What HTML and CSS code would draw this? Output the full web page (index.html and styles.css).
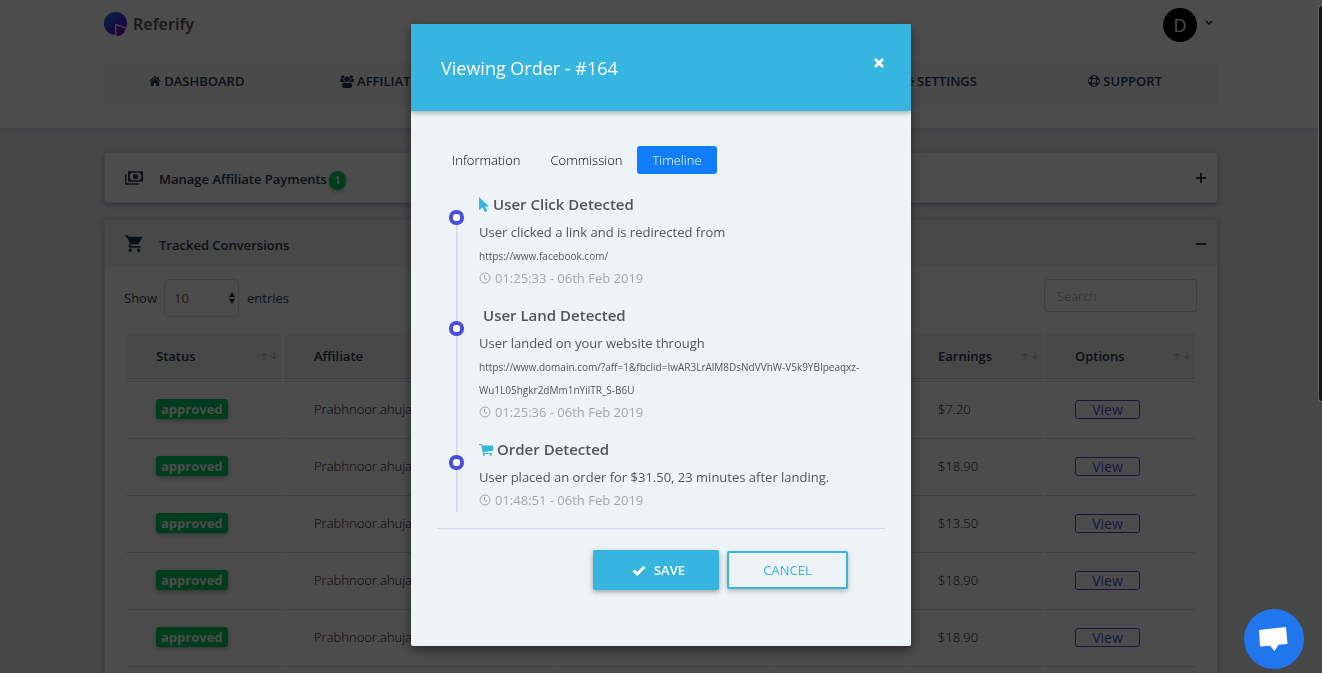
FILE: index.html
```html
<!DOCTYPE html>
<html lang="en">
<head>
<meta charset="utf-8">
<title>Referify</title>
<link rel="stylesheet" href="styles.css">
</head>
<body>
<svg class="sprite" aria-hidden="true">
  <symbol id="i-home" viewBox="0 0 24 24"><path d="M12 6.5 3.5 13.6V21a1 1 0 0 0 1 1h5.3v-6h4.4v6h5.3a1 1 0 0 0 1-1v-7.4z"/><path d="M23.6 12 20 9V3h-3v3.4l-3.8-3.2a1.9 1.9 0 0 0-2.4 0L.4 12l1.2 1.4L12 4.8l10.4 8.6z"/></symbol>
  <symbol id="i-users" viewBox="0 0 28 26"><circle cx="5.5" cy="4" r="3.6"/><circle cx="22.5" cy="4" r="3.6"/><circle cx="14" cy="8.5" r="5.4"/><path d="M7.3 9c-.2 2.300.5 4 1.700 5.200H3c-1.800 0-3-.8-3-2.500C0 9.500.4 7.500 2 7.500c.8.800 5 1.800 5.300 1.500zM20.700 9c.2 2.300-.5 4-1.700 5.200h6c1.800 0 3-.8 3-2.500 0-2.200-.4-4.200-2-4.200-.8.800-5 1.800-5.300 1.500zM8.500 14.500c1.500 1.300 3.500 2 5.500 2s4-.7 5.500-2c3.500.5 4.500 3.500 4.500 7.500 0 2.500-1.500 4-4 4H8c-2.500 0-4-1.500-4-4 0-4 1-7 4.500-7.500z"/></symbol>
  <symbol id="i-cog" viewBox="0 0 24 24"><path fill-rule="evenodd" d="M10 1h4l.6 3 2 .8L19.200 3 22 5.800l-1.800 2.600.8 2 3 .6v4l-3 .6-.8 2 1.800 2.600-2.800 2.800-2.600-1.800-2 .8-.6 2h-4l-.6-2-2-.8L4.800 23 2 20.200l1.800-2.600-.8-2-3-.6v-4l3-.6.8-2L2 5.800 4.800 3l2.600 1.800 2-.8zM12 9a4 4 0 1 0 0 8 4 4 0 0 0 0-8z"/></symbol>
  <symbol id="i-ring" viewBox="0 0 24 24"><g fill="none" stroke="currentColor"><circle cx="12" cy="12" r="10.900" stroke-width="1.800"/><circle cx="12" cy="12" r="5.300" stroke-width="1.800"/><circle cx="12" cy="12" r="8.300" stroke-width="4.600" stroke-dasharray="6.520 6.520" stroke-dashoffset="-3.260"/></g></symbol>
  <symbol id="i-money" viewBox="0 0 24 18"><path fill-rule="evenodd" d="M4 0h20v14H4zm2.500 4v6a2.500 2.500 0 0 1 2 2h11a2.500 2.500 0 0 1 2-2V4a2.500 2.500 0 0 1-2-2h-11a2.500 2.500 0 0 1-2 2zM14 3.500a3.500 3.500 0 1 1 0 7 3.500 3.500 0 0 1 0-7z"/><path d="M0 4h2v12h17v2H0z"/></symbol>
  <symbol id="i-cart" viewBox="1 2 21 20"><path d="M7 18a2 2 0 1 0 0 4 2 2 0 0 0 0-4zM1 2v2h2l3.600 7.590-1.350 2.450C4.520 15.370 5.480 17 7 17h12v-2H7.420a.25.25 0 0 1-.22-.37L8.100 13h7.450c.75 0 1.410-.41 1.750-1.030L21.700 4H5.210l-.94-2zm16 16a2 2 0 1 0 0 4 2 2 0 0 0 0-4z"/></symbol>
  <symbol id="i-facart" viewBox="0 0 28 24"><path d="M0 0h6l.8 3H28v10.500L9 16l.5 2H26v2H7.800L4.500 2H0z"/><circle cx="10" cy="22" r="2"/><circle cx="23.500" cy="22" r="2"/></symbol>
  <symbol id="i-pointer" viewBox="0 0 10 15"><path d="M0 0l10 9.500H6.200l2.200 4.300-2.600 1.200-2.100-4.600L0 13z"/></symbol>
  <symbol id="i-clock" viewBox="0 0 12 12"><g fill="none" stroke="currentColor"><circle cx="6" cy="6" r="5"/><path d="M5.500 3v3.500l2.500 1"/></g></symbol>
  <symbol id="i-check" viewBox="0 0 14 11"><path d="M1.500 5.500 5.300 9 12.500 1.800" fill="none" stroke="currentColor" stroke-width="3"/></symbol>
  <symbol id="i-sort" viewBox="0 0 18 8"><path d="M4 8V1M1 4l3-3 3 3M14 0v7M11 4l3 3 3-3" fill="none" stroke="currentColor"/></symbol>
</svg>

<header class="top">
  <div class="container">
    <div class="brand-row">
      <a class="brand" href="#">
        <svg class="logo" viewBox="0 0 24 25" aria-hidden="true">
          <defs><linearGradient id="lg" x1="0" y1="0" x2="1" y2="1"><stop offset="0" stop-color="#1696e8"/><stop offset=".5" stop-color="#3d2fd6"/><stop offset="1" stop-color="#6a0fd0"/></linearGradient></defs>
          <path fill="url(#lg)" d="M11.500 0A11.500 11.500 0 0 1 23 11.500c0 1.500-.3 3-.8 4.200L11.200 11.500V23A11.500 11.500 0 0 1 11.500 0z"/>
          <path fill="#6a0fd0" d="M12.500 13.300l9.500 3.500a11 11 0 0 1-9.500 7.700z"/>
        </svg>
        <span>Referify</span>
      </a>
      <button class="user" aria-label="Account">
        <span class="avatar">D</span>
        <svg class="caret" viewBox="0 0 8 6" aria-hidden="true"><path d="M1 1l3 3 3-3" fill="none" stroke="currentColor" stroke-width="1.500"/></svg>
      </button>
    </div>
    <nav class="nav">
      <a href="#"><svg class="ic"><use href="#i-home"/></svg>DASHBOARD</a>
      <a href="#"><svg class="ic wide"><use href="#i-users"/></svg>AFFILIATES</a>
      <a class="nav-settings" href="#"><svg class="ic"><use href="#i-cog"/></svg>SETTINGS</a>
      <a href="#"><svg class="ic"><use href="#i-ring"/></svg>SUPPORT</a>
    </nav>
  </div>
</header>

<main class="container">
  <section class="card">
    <div class="card-head">
      <svg class="head-ic money"><use href="#i-money"/></svg>
      <h2>Manage Affiliate Payments</h2><span class="count">1</span>
      <button class="toggle" aria-label="Expand"><svg viewBox="0 0 10 10"><path d="M0 5h10M5 0v10" stroke="currentColor" stroke-width="1.500"/></svg></button>
    </div>
  </section>
  <section class="card">
    <div class="card-head tinted">
      <svg class="head-ic"><use href="#i-cart"/></svg>
      <h2>Tracked Conversions</h2>
      <button class="toggle" aria-label="Collapse"><svg viewBox="0 0 10 10"><path d="M0 5h10" stroke="currentColor" stroke-width="1.500"/></svg></button>
    </div>
    <div class="card-body">
      <div class="tools">
        <label class="length">Show
          <span class="select"><select><option>10</option></select><svg viewBox="0 0 6 12" aria-hidden="true"><path d="M0 5l3-5 3 5zM0 7l3 5 3-5z"/></svg></span>
          entries</label>
        <input class="search" type="search" placeholder="Search" aria-label="Search">
      </div>
      <table class="grid">
        <colgroup><col class="c-status"><col class="c-aff"><col class="c-wide"><col class="c-earn"><col class="c-earn"><col class="c-opt"></colgroup>
        <thead><tr>
          <th><span>Status<svg><use href="#i-sort"/></svg></span></th>
          <th><span>Affiliate</span></th>
          <th></th>
          <th></th>
          <th><span>Earnings<svg><use href="#i-sort"/></svg></span></th>
          <th><span>Options<svg><use href="#i-sort"/></svg></span></th>
        </tr></thead>
        <tbody>
          <tr><td><span class="badge">approved</span></td><td>Prabhnoor.ahuja</td><td></td><td></td><td>$7.20</td><td><button class="view">View</button></td></tr>
          <tr><td><span class="badge">approved</span></td><td>Prabhnoor.ahuja</td><td></td><td></td><td>$18.90</td><td><button class="view">View</button></td></tr>
          <tr><td><span class="badge">approved</span></td><td>Prabhnoor.ahuja</td><td></td><td></td><td>$13.50</td><td><button class="view">View</button></td></tr>
          <tr><td><span class="badge">approved</span></td><td>Prabhnoor.ahuja</td><td></td><td></td><td>$18.90</td><td><button class="view">View</button></td></tr>
          <tr><td><span class="badge">approved</span></td><td>Prabhnoor.ahuja</td><td></td><td></td><td>$18.90</td><td><button class="view">View</button></td></tr>
          <tr><td></td><td></td><td></td><td></td><td></td><td></td></tr>
        </tbody>
      </table>
    </div>
  </section>
</main>

<div class="overlay">
  <div class="modal" role="dialog" aria-modal="true" aria-labelledby="modal-title">
    <div class="modal-head">
      <h1 id="modal-title">Viewing Order - #164</h1>
      <button class="close" aria-label="Close"><svg viewBox="0 0 10 10"><path d="M1 1l8 8M9 1l-8 8" stroke="currentColor" stroke-width="2.600"/></svg></button>
    </div>
    <div class="modal-body">
      <div class="tabs" role="tablist">
        <button role="tab">Information</button>
        <button role="tab">Commission</button>
        <button role="tab" class="active" aria-selected="true">Timeline</button>
      </div>
      <ol class="timeline">
        <li>
          <h3><svg class="pointer"><use href="#i-pointer"/></svg>User Click Detected</h3>
          <p>User clicked a link and is redirected from</p>
          <p class="url">https://www.facebook.com/</p>
          <p class="time"><svg><use href="#i-clock"/></svg>01:25:33 - 06th Feb 2019</p>
        </li>
        <li>
          <h3><span class="no-icon"></span>User Land Detected</h3>
          <p>User landed on your website through</p>
          <p class="url">https://www.domain.com/?aff=1&amp;fbclid=IwAR3LrAlM8DsNdVVhW-V5k9YBIpeaqxz-Wu1L05hgkr2dMm1nYilTR_S-B6U</p>
          <p class="time"><svg><use href="#i-clock"/></svg>01:25:36 - 06th Feb 2019</p>
        </li>
        <li>
          <h3><svg class="cart"><use href="#i-facart"/></svg>Order Detected</h3>
          <p>User placed an order for $31.50, 23 minutes after landing.</p>
          <p class="time"><svg><use href="#i-clock"/></svg>01:48:51 - 06th Feb 2019</p>
        </li>
      </ol>
      <div class="actions">
        <button class="save"><svg><use href="#i-check"/></svg>SAVE</button>
        <button class="cancel">CANCEL</button>
      </div>
    </div>
  </div>
</div>

<div class="scroll-thumb"></div>
<button class="chat" aria-label="Open chat"><svg viewBox="0 0 30 26"><path fill="#fff" d="M0 4 27 1l1.500 17-9 .8L15.500 25l-4.500-5.300-10 .8z"/></svg></button>
</body>
</html>
```
FILE: styles.css
```css
*, *::before, *::after { box-sizing: border-box; }
body {
  margin: 0;
  height: 100vh;
  overflow: hidden;
  background: #eaf0f1;
  color: #444;
  font: 13px/20px "Open Sans", "Noto Sans", sans-serif;
}
h1, h2, h3, p, ol { margin: 0; padding: 0; }
button, input, select { font: inherit; color: inherit; }
button { border: 0; padding: 0; background: none; cursor: pointer; }
a { color: inherit; text-decoration: none; }
svg { fill: currentColor; }
.sprite { position: absolute; width: 0; height: 0; }
.container { max-width: 1140px; margin: 0 auto; padding: 0 13px; }

.top { height: 128px; background: #fff; box-shadow: 0 1px 6px rgba(60, 70, 110, .2); }
.brand-row { display: flex; justify-content: space-between; height: 60px; }
.brand { display: flex; align-items: center; height: 48px; gap: 5px; color: #555; font: 600 16px/24px "Noto Sans", sans-serif; }
.logo { width: 24px; height: 25px; }
.user { display: flex; align-items: center; gap: 8px; height: 50px; padding-right: 5px; color: #10202c; }
.avatar { width: 34px; height: 34px; border-radius: 50%; background: #000; color: #fff; font-size: 18px; line-height: 34px; }
.caret { width: 8px; height: 6px; margin-bottom: 4px; }
.nav { display: grid; grid-template-columns: repeat(6, 1fr); height: 48px; background: #f9f9f9; }
.nav a { display: flex; align-items: center; justify-content: center; gap: 3px; height: 42px; color: #26384a; font-weight: 600; }
.nav-settings { grid-column: 5; }
.ic { width: 12px; height: 12px; }
.ic.wide { width: 14px; height: 13px; }

main.container { padding-top: 24px; }
.card { margin-bottom: 16px; border: 1px solid #e2e2ee; border-radius: 3px; background: #fff; box-shadow: 0 2px 6px rgba(40, 45, 90, .35); overflow: hidden; }
.card-head { display: flex; align-items: center; height: 49px; padding: 0 11px 0 20px; color: #26384a; }
.card-head.tinted { height: 47px; background: #eff3f2; }
.card-head h2 { padding-top: 2px; font-size: 13px; line-height: 20px; font-weight: 600; }
.head-ic { width: 18px; height: 17px; margin-right: 16px; color: #27395a; }
.head-ic.money { height: 14px; }
.count { width: 17px; height: 19px; margin: 5px 0 0 2px; border-radius: 9px; background: #00c866; color: #fff; font-weight: 700; font-size: 11px; line-height: 18px; text-align: center; box-shadow: 0 2px 4px rgba(0, 0, 0, .25); }
.toggle { margin-left: auto; color: #000; }
.toggle svg { display: block; width: 10px; height: 10px; }
.card-body { padding: 12px 20px 12px 19px; }
.tools { display: flex; justify-content: space-between; align-items: flex-start; height: 52px; }
.length { display: flex; align-items: center; gap: 7px; color: #333b48; }
.select { position: relative; margin-right: 1px; }
.select select { display: block; appearance: none; width: 75px; height: 38px; padding: 0 9px; border: 1px solid #d8d8e6; border-radius: 5px; background: #fff; color: #666; }
.select svg { position: absolute; right: 4px; top: 13px; width: 6px; height: 12px; color: #222; }
.search { width: 153px; height: 33px; padding: 0 12px; border: 1px solid #d4d4e2; border-radius: 3px; background: #fff; font-size: 13px; font-weight: 300; }
.search::placeholder { color: #96969c; }

.grid { width: 100%; table-layout: fixed; border-collapse: separate; border-spacing: 2px; }
.c-status { width: 156px; }
.c-wide { width: 214px; }
.c-earn { width: 135px; }
.c-opt { width: 150px; }
.grid th { height: 46px; padding: 0 0 0 30px; border-bottom: 1px solid #cfd2e0; background: #eff3f2; color: #26384a; font-weight: 600; text-align: left; }
.grid th span { display: flex; align-items: center; justify-content: space-between; padding-right: 4px; }
.grid th svg { width: 18px; height: 8px; color: #aaa; }
.grid td { height: 55px; padding: 0 0 0 30px; border-top: 1px solid #d8d8e6; color: #10101c; font-weight: 300; white-space: nowrap; }
.badge { display: inline-block; padding: 0 5px; border-radius: 3px; background: #00c866; color: #fff; font-weight: 700; line-height: 20px; box-shadow: 0 2px 5px rgba(0, 0, 0, .3); }
.view { display: block; width: 65px; height: 19px; border: 1px solid #4a50dd; border-radius: 3px; color: #4a50dd; font-size: 14px; line-height: 17px; font-weight: 400; }

.overlay { position: fixed; inset: 0; display: flex; align-items: flex-start; justify-content: center; padding-top: 24px; background: rgba(0, 0, 0, .7); }
.modal { width: 500px; border-radius: 2px; background: #eef3f6; box-shadow: 0 4px 12px rgba(0, 0, 0, .5); overflow: hidden; }
.modal-head { display: flex; align-items: center; justify-content: space-between; height: 87px; padding: 0 27px 0 30px; background: #35b5e0; color: #fff; box-shadow: 0 2px 5px rgba(0, 0, 0, .3); }
.modal-head h1 { font-size: 18px; line-height: 24px; font-weight: 400; }
.close { margin-bottom: 10px; }
.close svg { display: block; width: 10px; height: 10px; }
.modal-body { padding: 35px 26px 56px; }
.tabs { display: flex; }
.tabs button { height: 28px; padding: 0 15px; border-radius: 3px; color: #000; font-weight: 300; line-height: 28px; }
.tabs .active { background: #107efa; color: #fff; }
.timeline { position: relative; margin: 16px 0 0 19px; padding: 0 0 2px 23px; list-style: none; }
.timeline::before { content: ""; position: absolute; left: 0; top: 27px; bottom: 0; width: 2px; background: #d6dbee; }
.timeline li { position: relative; color: #555; }
.timeline li + li { margin-top: 13px; }
.timeline li::before { content: ""; position: absolute; left: -30px; top: 20px; width: 15px; height: 15px; border: 4px solid #4a50dd; border-radius: 7px; background: #fff; }
.timeline h3 { display: flex; align-items: center; gap: 4px; font-size: 15px; line-height: 29px; font-weight: 600; }
.timeline h3 svg { color: #35b5e0; }
.pointer { width: 10px; height: 15px; }
.cart { width: 14px; height: 12px; }
.timeline p { line-height: 26px; }
.timeline .url { font-size: 10px; line-height: 23px; overflow-wrap: anywhere; }
.timeline .time { display: flex; align-items: center; gap: 4px; line-height: 20px; color: #a4a8aa; }
.time svg { width: 12px; height: 12px; }
.actions { display: flex; align-items: center; justify-content: flex-end; gap: 8px; margin-top: 16px; padding: 21px 37px 0 0; border-top: 1px solid #d0d9ec; }
.save { display: flex; align-items: center; justify-content: center; gap: 8px; width: 126px; height: 40px; padding-left: 5px; border-radius: 2px; background: #35b5e0; color: #fff; font-weight: 600; box-shadow: 0 2px 5px rgba(0, 0, 0, .35); }
.save svg { width: 14px; height: 11px; }
.cancel { width: 121px; height: 38px; border: 2px solid #35b5e0; border-radius: 2px; color: #35b5e0; box-shadow: 0 2px 5px rgba(0, 0, 0, .25); background: #eef3f6; }

.scroll-thumb { position: fixed; right: 0; top: 5px; width: 4px; height: 397px; border: 1px solid #666; border-right: 0; border-radius: 4px 0 0 4px; background: #151617; }
.chat { position: fixed; right: 18px; bottom: 4px; display: grid; place-items: center; width: 60px; height: 60px; border-radius: 50%; background: #2176ee; }
.chat svg { width: 30px; height: 26px; }
```
